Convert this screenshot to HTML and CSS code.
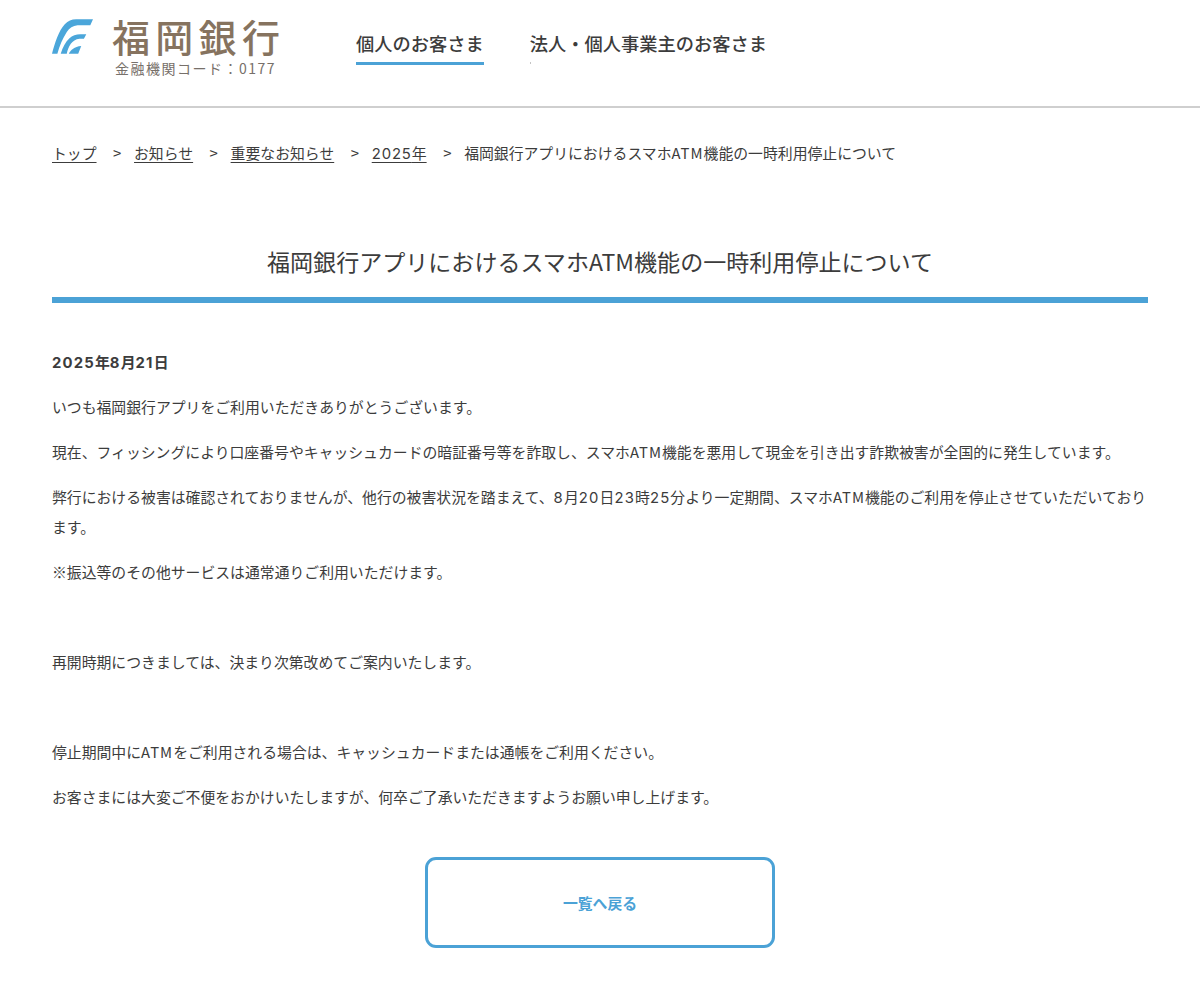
FILE: index.html
```html
<!DOCTYPE html>
<html lang="ja">
<head>
<meta charset="utf-8">
<title>福岡銀行アプリにおけるスマホATM機能の一時利用停止について</title>
<link rel="stylesheet" href="styles.css">
</head>
<body>
<header class="site-header">
  <div class="logo">
    <svg class="logo-mark" width="41" height="35" viewBox="0 0 122 103">
      <path fill="#4ba6da" d="M0 103 C8 72 20 34 38 15 C48 5 58 0 72 0 L122 0 L114 18 L76 18 C62 19 52 26 44 38 C32 56 22 80 16 103 Z"/>
      <path fill="#4ba6da" d="M26 103 C32 84 40 68 52 57 C60 49 72 45 84 45 L102 45 L95 58 L82 58 C70 59 62 65 56 73 C50 81 46 92 44 103 Z"/>
      <path fill="#4ba6da" d="M50 103 C56 92 66 82 87 80 L78 103 Z"/>
    </svg>
    <div class="logo-text">
      <div class="logo-name">福岡銀行</div>
      <div class="logo-code">金融機関コード：0177</div>
    </div>
  </div>
  <nav class="main-nav">
    <a class="nav-item is-active">個人のお客さま</a>
    <a class="nav-item has-speck">法人・個人事業主のお客さま</a>
  </nav>
</header>
<main class="content">
  <ol class="breadcrumb">
    <li><a>トップ</a></li>
    <li><a>お知らせ</a></li>
    <li><a>重要なお知らせ</a></li>
    <li><a><span class="num">2025</span>年</a></li>
    <li>福岡銀行アプリにおけるスマホ<span class="atm">ATM</span>機能の一時利用停止について</li>
  </ol>
  <h1 class="page-title">福岡銀行アプリにおけるスマホATM機能の一時利用停止について</h1>
  <article class="article">
    <p class="date"><span class="num">2025</span>年<span class="num">8</span>月<span class="num">21</span>日</p>
    <p>いつも福岡銀行アプリをご利用いただきありがとうございます。</p>
    <p>現在、フィッシングにより口座番号やキャッシュカードの暗証番号等を詐取し、スマホ<span class="atm">ATM</span>機能を悪用して現金を引き出す詐欺被害が全国的に発生しています。</p>
    <p>弊行における被害は確認されておりませんが、他行の被害状況を踏まえて、<span class="num">8</span>月<span class="num">20</span>日<span class="num">23</span>時<span class="num">25</span>分より一定期間、スマホ<span class="atm">ATM</span>機能のご利用を停止させていただいております。</p>
    <p>※振込等のその他サービスは通常通りご利用いただけます。</p>
    <p>&nbsp;</p>
    <p>再開時期につきましては、決まり次第改めてご案内いたします。</p>
    <p>&nbsp;</p>
    <p>停止期間中に<span class="atm">ATM</span>をご利用される場合は、キャッシュカードまたは通帳をご利用ください。</p>
    <p>お客さまには大変ご不便をおかけいたしますが、何卒ご了承いただきますようお願い申し上げます。</p>
  </article>
  <div class="actions"><a class="back-button">一覧へ戻る</a></div>
</main>
</body>
</html>
```
FILE: styles.css
```css
* { box-sizing: border-box; }
html, body { margin: 0; padding: 0; }
body {
  background: #fff;
  color: #3c3c3c;
  font-family: "Noto Sans CJK JP", "Noto Sans", sans-serif;
  font-size: 14.85px;
}
.num { font-family: Inter, "Noto Sans", sans-serif; letter-spacing: .08em; line-height: 1; }
.atm { letter-spacing: 1px; }
.site-header {
  display: flex;
  height: 108px;
  padding: 18px 52px 0;
  border-bottom: 2px solid #cfcfcf;
}
.logo { display: flex; width: 304px; gap: 19px; }
.logo-mark { display: block; margin-top: 1px; }
.logo-text { display: flex; flex-direction: column; width: 170px; }
.logo-name {
  color: #86735f;
  font-size: 38px;
  font-weight: 500;
  letter-spacing: 5.3px;
  line-height: 36px;
  white-space: nowrap;
}
.logo-code {
  color: #77706a;
  font-size: 14px;
  letter-spacing: 1.5px;
  line-height: 20px;
  margin: 4px 0 0 3px;
  white-space: nowrap;
}
.main-nav { display: flex; gap: 46px; padding-top: 6px; }
.nav-item {
  position: relative;
  display: block;
  height: 41px;
  font-size: 18.25px;
  font-weight: 500;
  line-height: 38px;
  white-space: nowrap;
}
.nav-item.is-active { border-bottom: 3px solid #4ba2d6; }
.has-speck::after {
  content: "";
  position: absolute;
  left: 0;
  top: 38px;
  width: 1px;
  height: 2px;
  background: #c4c4c4;
}
.content { padding: 0 52px; }
.breadcrumb {
  display: flex;
  gap: 37.5px;
  list-style: none;
  margin: 0;
  padding: 35px 0 0;
  line-height: 20px;
}
.breadcrumb .num { letter-spacing: .06em; }
.breadcrumb li { position: relative; white-space: nowrap; }
.breadcrumb li + li::before {
  content: ">";
  position: absolute;
  left: -21px;
  top: 0;
}
.breadcrumb a { text-decoration: underline; text-underline-offset: 3px; }
.page-title {
  margin: 81px 0 0;
  padding-bottom: 19px;
  border-bottom: 6px solid #4ba2d6;
  font-size: 23.05px;
  font-weight: 400;
  line-height: 34px;
  text-align: center;
}
.article { padding-top: 44px; }
.article p { margin: 0 0 15px; line-height: 30px; }
.article .date { font-weight: 700; }
.actions { display: flex; justify-content: center; margin-top: 45px; }
.back-button {
  display: flex;
  align-items: center;
  justify-content: center;
  width: 350px;
  height: 91px;
  border: 3px solid #4ba2d6;
  border-radius: 11px;
  color: #4ba2d6;
  font-weight: 700;
}
```
